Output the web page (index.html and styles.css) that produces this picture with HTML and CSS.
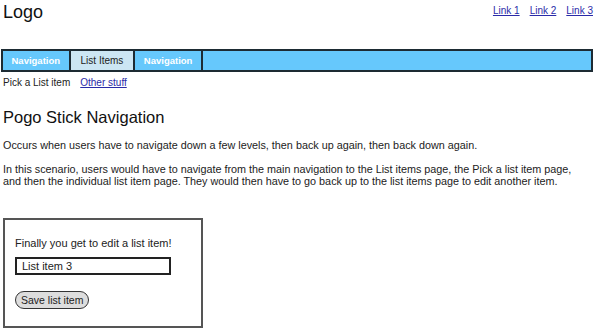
FILE: index.html
```html
<!DOCTYPE html>
<html lang="en">

<head>
  <meta charset="UTF-8">
  <meta name="viewport" content="width=device-width, initial-scale=1.0">
  <title>Pogo Stick Navigation</title>
  <link rel="stylesheet" href="styles.css">
</head>

<body>
  <header>
    <div class="logo">Logo</div>
    <div class="top-links">
      <a href="#">Link 1</a>
      <a href="#">Link 2</a>
      <a href="#">Link 3</a>
    </div>
  </header>

  <nav class="main-nav">
    <a href="#" class="nav-item">Navigation</a>
    <a href="#" class="nav-item active">List Items</a>
    <a href="#" class="nav-item">Navigation</a>
  </nav>

  <div class="sub-nav">
    <span>Pick a List item</span>
    <a href="#">Other stuff</a>
  </div>

  <h1>Pogo Stick Navigation</h1>
  <p>Occurs when users have to navigate down a few levels, then back up again, then back down again.</p>
  <p>In this scenario, users would have to navigate from the main navigation to the List items page, the Pick a list item page,<br>
    and then the individual list item page. They would then have to go back up to the list items page to edit another item.</p>

  <div class="edit-box">
    <div class="edit-label">Finally you get to edit a list item!</div>
    <input type="text" class="edit-input" value="List item 3">
    <button class="save-btn">Save list item</button>
  </div>
</body>

</html>
```

FILE: styles.css
```css
body {
  margin: 0;
  padding: 0 7px 0 3px;
  font-family: "Liberation Sans", Arial, sans-serif;
  font-size: 11px;
  color: #222;
  background: white;
}

a {
  color: #2a2aa8;
}

header {
  display: flex;
  justify-content: space-between;
  align-items: flex-start;
  height: 49px;
}

header .logo {
  font-size: 18px;
  line-height: 22px;
  margin-top: 1px;
  color: #111;
}

header .top-links {
  display: flex;
  gap: 10px;
  margin-top: 5px;
  font-size: 10px;
}

.main-nav {
  display: flex;
  height: 19px;
  background: #66c8fc;
  border: 2px solid #1d2b33;
  margin-left: -2px;
  font-size: 10px;
}

.nav-item {
  display: flex;
  align-items: center;
  padding: 0 8.5px;
  border-right: 2px solid #1d2b33;
  color: white;
  font-size: 9.5px;
  font-weight: bold;
  text-decoration: none;
}

.nav-item.active {
  padding: 0 10px;
  background: #cce6f3;
  color: #222;
  font-size: 10px;
  font-weight: normal;
}

.sub-nav {
  display: flex;
  gap: 10px;
  margin-top: 5px;
  font-size: 10px;
}

h1 {
  font-size: 16.5px;
  font-weight: normal;
  margin: 20px 0 12px;
  color: #111;
}

p {
  margin: 0 0 12px;
  font-size: 10.8px;
  line-height: 12px;
}

.edit-box {
  width: 176px;
  margin-top: 31px;
  border: 2px solid #555;
  padding: 17px 10px 17px 10px;
}

.edit-label {
  margin-bottom: 8px;
}

.edit-input {
  display: block;
  width: 142px;
  height: 14px;
  border: 2px solid #222;
  padding: 0 5px;
  font-family: inherit;
  font-size: 11px;
  color: #222;
  margin: 0 0 16px 0;
}

.save-btn {
  display: block;
  height: 18px;
  padding: 0 5px;
  border: 1.5px solid #333;
  border-radius: 9px;
  background: #ddd;
  font-family: inherit;
  font-size: 10.5px;
  color: #222;
}
```
